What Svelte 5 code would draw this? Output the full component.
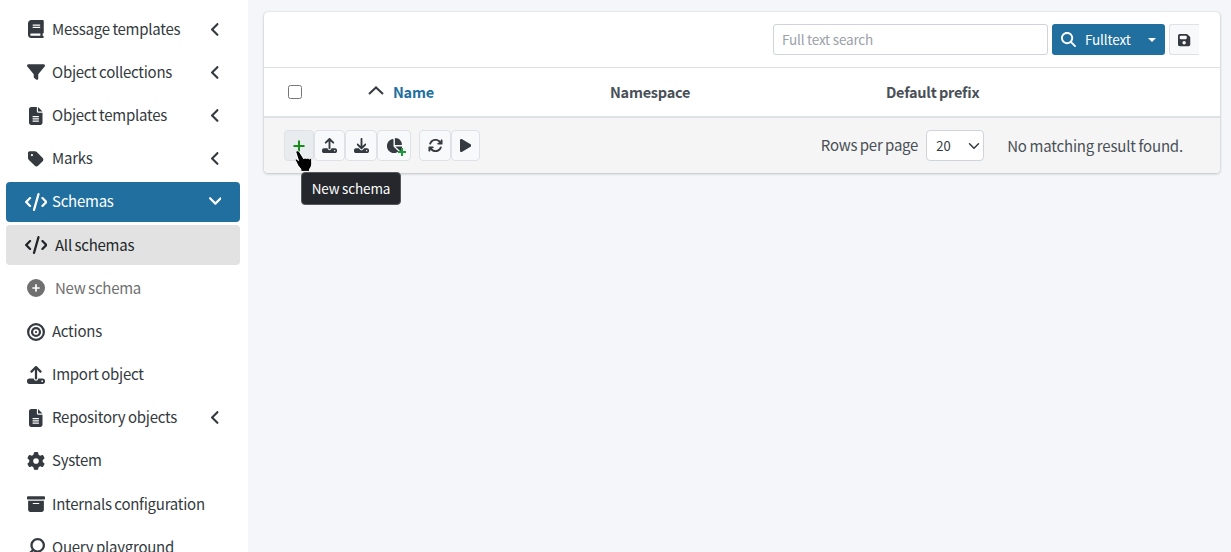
<script>
  const I = {
    book: ['0 0 448 512', 'M96 0C43 0 0 43 0 96V416c0 53 43 96 96 96H384h32c17.7 0 32-14.3 32-32s-14.3-32-32-32V384c17.7 0 32-14.3 32-32V32c0-17.7-14.3-32-32-32H384 96zm0 384H352v64H96c-17.7 0-32-14.3-32-32s14.3-32 32-32zm32-240c0-8.8 7.2-16 16-16H336c8.8 0 16 7.2 16 16s-7.2 16-16 16H144c-8.8 0-16-7.2-16-16zm16 48H336c8.8 0 16 7.2 16 16s-7.2 16-16 16H144c-8.8 0-16-7.2-16-16s7.2-16 16-16z'],
    filter: ['0 0 512 512', 'M3.9 54.9C10.5 40.9 24.5 32 40 32H472c15.5 0 29.5 8.9 36.1 22.9s4.6 30.5-5.2 42.5L320 320.9V448c0 12.1-6.8 23.2-17.7 28.6s-23.8 4.3-33.5-3l-64-48c-8.1-6-12.8-15.5-12.8-25.6V320.9L9 97.3C-.7 85.4-2.8 68.8 3.9 54.9z'],
    file: ['0 0 384 512', 'M64 0C28.7 0 0 28.7 0 64V448c0 35.3 28.7 64 64 64H320c35.3 0 64-28.7 64-64V160H256c-17.7 0-32-14.3-32-32V0H64zM256 0V128H384L256 0zM112 256H272c8.8 0 16 7.2 16 16s-7.2 16-16 16H112c-8.8 0-16-7.2-16-16s7.2-16 16-16zm0 64H272c8.8 0 16 7.2 16 16s-7.2 16-16 16H112c-8.8 0-16-7.2-16-16s7.2-16 16-16zm0 64H272c8.8 0 16 7.2 16 16s-7.2 16-16 16H112c-8.8 0-16-7.2-16-16s7.2-16 16-16z'],
    tag: ['0 0 448 512', 'M0 80V229.5c0 17 6.7 33.3 18.7 45.3l176 176c25 25 65.5 25 90.5 0L418.7 317.3c25-25 25-65.5 0-90.5l-176-176c-12-12-28.3-18.7-45.3-18.7H48C21.5 32 0 53.5 0 80zm112 32a32 32 0 1 1 0 64 32 32 0 1 1 0-64z'],
    code: ['0 0 640 512', 'M392.8 1.2c-17-4.9-34.7 5-39.6 22l-128 448c-4.9 17 5 34.7 22 39.6s34.7-5 39.6-22l128-448c4.9-17-5-34.7-22-39.6zm80.6 120.1c-12.5 12.5-12.5 32.8 0 45.3L562.7 256l-89.4 89.4c-12.5 12.5-12.5 32.8 0 45.3s32.8 12.5 45.3 0l112-112c12.5-12.5 12.5-32.8 0-45.3l-112-112c-12.5-12.5-32.8-12.5-45.3 0zm-306.7 0c-12.5-12.5-32.8-12.5-45.3 0l-112 112c-12.5 12.5-12.5 32.8 0 45.3l112 112c12.5 12.5 32.8 12.5 45.3 0s12.5-32.8 0-45.3L77.3 256l89.4-89.4c12.5-12.5 12.5-32.8 0-45.3z'],
    plusc: ['0 0 512 512', 'M256 512A256 256 0 1 0 256 0a256 256 0 1 0 0 512zM232 344V280H168c-13.3 0-24-10.7-24-24s10.7-24 24-24h64V168c0-13.3 10.7-24 24-24s24 10.7 24 24v64h64c13.3 0 24 10.7 24 24s-10.7 24-24 24H280v64c0 13.3-10.7 24-24 24s-24-10.7-24-24z'],
    bullseye: ['0 0 512 512', 'M448 256A192 192 0 1 0 64 256a192 192 0 1 0 384 0zM0 256a256 256 0 1 1 512 0A256 256 0 1 1 0 256zm256 80a80 80 0 1 0 0-160 80 80 0 1 0 0 160zm0-224a144 144 0 1 1 0 288 144 144 0 1 1 0-288zM224 256a32 32 0 1 1 64 0 32 32 0 1 1 -64 0z'],
    upload: ['0 0 512 512', 'M288 109.3V352c0 17.7-14.3 32-32 32s-32-14.3-32-32V109.3l-73.4 73.4c-12.5 12.5-32.8 12.5-45.3 0s-12.5-32.8 0-45.3l128-128c12.5-12.5 32.8-12.5 45.3 0l128 128c12.5 12.5 12.5 32.8 0 45.3s-32.8 12.5-45.3 0L288 109.3zM64 352H192c0 35.3 28.7 64 64 64s64-28.7 64-64H448c35.3 0 64 28.7 64 64v32c0 35.3-28.7 64-64 64H64c-35.3 0-64-28.7-64-64V416c0-35.3 28.7-64 64-64zM432 456a24 24 0 1 0 0-48 24 24 0 1 0 0 48z'],
    download: ['0 0 512 512', 'M288 32c0-17.7-14.3-32-32-32s-32 14.3-32 32V274.7l-73.4-73.4c-12.5-12.5-32.8-12.5-45.3 0s-12.5 32.8 0 45.3l128 128c12.5 12.5 32.8 12.5 45.3 0l128-128c12.5-12.5 12.5-32.8 0-45.3s-32.8-12.5-45.3 0L288 274.7V32zM64 352c-35.3 0-64 28.7-64 64v32c0 35.3 28.7 64 64 64H448c35.3 0 64-28.7 64-64V416c0-35.3-28.7-64-64-64H346.5l-45.3 45.3c-25 25-65.5 25-90.5 0L165.5 352H64zm368 56a24 24 0 1 1 0 48 24 24 0 1 1 0-48z'],
    cog: ['0 0 512 512', 'M495.9 166.6c3.2 8.7 .5 18.4-6.4 24.6l-43.3 39.4c1.1 8.3 1.7 16.8 1.7 25.4s-.6 17.1-1.7 25.4l43.3 39.4c6.9 6.2 9.6 15.9 6.4 24.6c-4.4 11.9-9.7 23.3-15.8 34.3l-4.7 8.1c-6.6 11-14 21.4-22.1 31.2c-5.9 7.2-15.7 9.6-24.5 6.8l-55.7-17.7c-13.4 10.3-28.2 18.9-44 25.4l-12.5 57.1c-2 9.1-9 16.3-18.2 17.8c-13.8 2.3-28 3.5-42.5 3.5s-28.7-1.2-42.5-3.5c-9.2-1.5-16.2-8.7-18.2-17.8l-12.5-57.1c-15.8-6.5-30.6-15.1-44-25.4L83.1 425.9c-8.8 2.8-18.6 .3-24.5-6.8c-8.1-9.8-15.5-20.2-22.1-31.2l-4.7-8.1c-6.1-11-11.4-22.4-15.8-34.3c-3.2-8.7-.5-18.4 6.4-24.6l43.3-39.4C64.6 273.1 64 264.6 64 256s.6-17.1 1.7-25.4L22.4 191.2c-6.9-6.2-9.6-15.9-6.4-24.6c4.4-11.9 9.7-23.3 15.8-34.3l4.7-8.1c6.6-11 14-21.4 22.1-31.2c5.9-7.2 15.7-9.6 24.5-6.8l55.7 17.7c13.4-10.3 28.2-18.9 44-25.4l12.5-57.1c2-9.1 9-16.3 18.2-17.8C227.3 1.2 241.5 0 256 0s28.7 1.2 42.5 3.5c9.2 1.5 16.2 8.7 18.2 17.8l12.5 57.1c15.8 6.5 30.6 15.1 44 25.4l55.7-17.7c8.8-2.8 18.6-.3 24.5 6.8c8.1 9.8 15.5 20.2 22.1 31.2l4.7 8.1c6.1 11 11.4 22.4 15.8 34.3zM256 336a80 80 0 1 0 0-160 80 80 0 1 0 0 160z'],
    archive: ['0 0 512 512', 'M32 32H480c17.7 0 32 14.3 32 32V96c0 17.7-14.3 32-32 32H32C14.3 128 0 113.7 0 96V64C0 46.3 14.3 32 32 32zm0 128H480V416c0 35.3-28.7 64-64 64H96c-35.3 0-64-28.7-64-64V160zm128 80c0 8.8 7.2 16 16 16H336c8.8 0 16-7.2 16-16s-7.2-16-16-16H176c-8.8 0-16 7.2-16 16z'],
    search: ['0 0 512 512', 'M416 208c0 45.9-14.9 88.3-40 122.7L502.6 457.4c12.5 12.5 12.5 32.8 0 45.3s-32.8 12.5-45.3 0L330.7 376c-34.4 25.2-76.8 40-122.7 40C93.1 416 0 322.9 0 208S93.1 0 208 0S416 93.1 416 208zM208 352a144 144 0 1 0 0-288 144 144 0 1 0 0 288z'],
    save: ['0 0 448 512', 'M64 32C28.7 32 0 60.7 0 96V416c0 35.3 28.7 64 64 64H384c35.3 0 64-28.7 64-64V173.3c0-17-6.7-33.3-18.7-45.3L352 50.7C340 38.7 323.7 32 306.7 32H64zm0 96c0-17.7 14.3-32 32-32H288c17.7 0 32 14.3 32 32v64c0 17.7-14.3 32-32 32H96c-17.7 0-32-14.3-32-32V128zM224 288a64 64 0 1 1 0 128 64 64 0 1 1 0-128z'],
    sync: ['0 0 512 512', 'M105.1 202.6c7.7-21.8 20.2-42.3 37.8-59.8c62.5-62.5 163.8-62.5 226.3 0L386.3 160H352c-17.7 0-32 14.3-32 32s14.3 32 32 32H463.5c0 0 0 0 0 0h.4c17.7 0 32-14.3 32-32V80c0-17.7-14.3-32-32-32s-32 14.3-32 32v35.2L414.4 97.6c-87.5-87.5-229.3-87.5-316.8 0C73.2 122 55.6 150.7 44.8 181.4c-5.9 16.7 2.9 34.9 19.5 40.8s34.9-2.9 40.8-19.5zM39 289.3c-5 1.5-9.8 4.2-13.7 8.2c-4 4-6.7 8.8-8.1 14c-.3 1.2-.6 2.5-.8 3.8c-.3 1.7-.4 3.4-.4 5.1V432c0 17.7 14.3 32 32 32s32-14.3 32-32V396.9l17.6 17.5 0 0c87.5 87.4 229.3 87.4 316.7 0c24.4-24.4 42.1-53.1 52.9-83.7c5.9-16.7-2.9-34.9-19.5-40.8s-34.9 2.9-40.8 19.5c-7.7 21.8-20.2 42.3-37.8 59.8c-62.5 62.5-163.8 62.5-226.3 0l-.1-.1L125.6 352H160c17.7 0 32-14.3 32-32s-14.3-32-32-32H48.4c-1.6 0-3.2 .1-4.8 .3s-3.1 .5-4.6 1z'],
    play: ['0 0 384 512', 'M73 39c-14.8-9.1-33.4-9.4-48.5-.9S0 62.6 0 80V432c0 17.4 9.4 33.4 24.5 41.9s33.7 8.1 48.5-.9L361 297c14.3-8.7 23-24.2 23-41s-8.7-32.2-23-41L73 39z'],
    pie: ['0 0 576 512', 'M304 240V16.6c0-9 7-16.6 16-16.6C443.7 0 544 100.3 544 224c0 9-7.6 16-16.6 16H304zM32 272C32 150.7 122.1 50.3 239 34.3c9.2-1.3 17 6.1 17 15.4V288L412.5 444.5c6.7 6.7 6.2 17.7-1.5 23.1C371.8 495.6 323.8 512 272 512C139.5 512 32 404.6 32 272zm526.4 16c9.3 0 16.6 7.8 15.4 17c-7.7 55.9-34.6 105.6-73.9 142.3c-6 5.6-15.4 5.2-21.2-.7L320 288H558.4z'],
    left: ['0 0 256 512', 'M9.4 233.4c-12.5 12.5-12.5 32.8 0 45.3l160 160c12.5 12.5 32.8 12.5 45.3 0s12.5-32.8 0-45.3L77.3 256 214.6 118.6c12.5-12.5 12.5-32.8 0-45.3s-32.8-12.5-45.3 0l-160 160z'],
    down: ['0 0 384 512', 'M169.4 342.6c12.5 12.5 32.8 12.5 45.3 0l160-160c12.5-12.5 12.5-32.8 0-45.3s-32.8-12.5-45.3 0L192 274.7 54.6 137.4c-12.5-12.5-32.8-12.5-45.3 0s-12.5 32.8 0 45.3l160 160z']
  };

  const nav = [
    { icon: 'book', label: 'Message templates', arrow: true },
    { icon: 'filter', label: 'Object collections', arrow: true },
    { icon: 'file', label: 'Object templates', arrow: true },
    { icon: 'tag', label: 'Marks', arrow: true },
    { icon: 'code', label: 'Schemas', open: true, kind: 'active' },
    { icon: 'code', label: 'All schemas', kind: 'current' },
    { icon: 'plusc', label: 'New schema', kind: 'muted' },
    { icon: 'bullseye', label: 'Actions' },
    { icon: 'upload', label: 'Import object' },
    { icon: 'file', label: 'Repository objects', arrow: true },
    { icon: 'cog', label: 'System' },
    { icon: 'archive', label: 'Internals configuration' },
    { icon: 'search', label: 'Query playground', flip: true }
  ];
</script>

{#snippet ic(name, cls = '')}
  <svg class="ic {cls}" viewBox={I[name][0]} aria-hidden="true"><path d={I[name][1]} /></svg>
{/snippet}

<div class="page">
  <aside class="sidebar">
    {#each nav as n}
      <div class="nav {n.kind ?? ''}">
        <span class="nav-icon">{@render ic(n.icon, n.flip ? 'flip' : '')}</span>
        <span class="nav-label">{n.label}</span>
        {#if n.arrow}{@render ic('left', 'chev')}{/if}
        {#if n.open}{@render ic('down', 'chev-down')}{/if}
      </div>
    {/each}
  </aside>

  <main class="main">
    <section class="card">
      <div class="search-bar">
        <input class="search" placeholder="Full text search" />
        <button class="go">
          {@render ic('search', 'go-ic')}
          <span class="go-label">Fulltext</span>
          <span class="caret"></span>
        </button>
        <button class="save">{@render ic('save', 'save-ic')}</button>
      </div>

      <div class="thead">
        <span class="cell"><span class="check"></span></span>
        <span class="cell name">
          <svg class="sort" viewBox="0 0 16 9" aria-hidden="true"><path d="M1 8 L8 1.4 L15 8" /></svg>
          <span>Name</span>
        </span>
        <span class="cell">Namespace</span>
        <span class="cell">Default prefix</span>
      </div>

      <div class="tfoot">
        <div class="tools">
          <div class="group">
            <button class="tool add w30">
              <svg class="plus" viewBox="0 0 12 12" aria-hidden="true"><path d="M6 .5v11M.5 6h11" /></svg>
            </button>
            <button class="tool w31">{@render ic('upload', 't-ic')}</button>
            <button class="tool w32">{@render ic('download', 't-ic')}</button>
            <button class="tool w34 pie-btn">
              {@render ic('pie', 't-ic')}
              <svg class="mini-plus" viewBox="0 0 10 10" aria-hidden="true"><path d="M5 1v8M1 5h8" /></svg>
            </button>
          </div>
          <div class="group">
            <button class="tool w32">{@render ic('sync', 't-ic')}</button>
            <button class="tool w29">{@render ic('play', 't-ic')}</button>
          </div>
        </div>
        <div class="paging">
          <span class="rows-label">Rows per page</span>
          <select class="rows"><option>20</option></select>
          <span class="result">No matching result found.</span>
        </div>
      </div>

      <div class="tooltip">New schema</div>
      <svg class="cursor" viewBox="0 0 18 22" aria-hidden="true">
        <path d="M2.8.8C1.7.8 1.2 1.8 1.5 2.8L4 10.6 2.6 9.4C1.5 8.5.5 9.2.9 10.4l2.6 5.2 2.9 3.6v2.2h8.6v-2.2c1.4-1.6 2.2-3.6 2.2-6V9.800c0-1.400-2-1.700-2.500-.6-.2-1.300-2.200-1.500-2.700-.3-.4-1.200-2.300-1.300-2.700-.1L5.300 2.400C4.800 1.300 3.900.8 2.800.8z" fill="#000" stroke="#fff" stroke-width="1" stroke-linejoin="round"/>
      </svg>
    </section>
  </main>
</div>

<style>
  :global(body) { margin: 0; background: #f4f6f9; }
  .page {
    display: flex;
    height: 552px;
    overflow: hidden;
    background: #f4f6f9;
    color: #343a40;
    font-family: "Noto Sans CJK SC", "Liberation Sans", sans-serif;
    font-size: 15px;
    letter-spacing: -.25px;
    word-spacing: -.5px;
    line-height: 24px;
  }
  .sidebar {
    width: 248px;
    flex: none;
    box-sizing: border-box;
    padding: 9.2px 8px 0 6px;
    background: #fff;
    overflow: hidden;
  }
  .nav {
    display: flex;
    align-items: center;
    height: 40px;
    margin-bottom: 3.2px;
    padding: 0 16px;
    border-radius: 4px;
    color: #343a40;
    white-space: nowrap;
  }
  .nav-icon {
    width: 26px;
    margin: 0 3px 0 1px;
    flex: none;
    display: flex;
    justify-content: center;
  }
  .nav-label { flex: 1; position: relative; top: -.6px; }
  .ic { display: block; height: 18px; fill: currentColor; flex: none; }
  .flip { transform: scaleX(-1); }
  .nav .chev { height: 17px; width: 8.5px; margin-right: 4.500px; }
  .nav .chev-down { height: 17px; width: 12.75px; margin-right: 2.6px; }
  .active { background: #206f9f; color: #fff; }
  .current { background: #e2e2e2; color: #212529; }
  .current .nav-label, .muted .nav-label { margin-left: 3px; }
  .muted { color: #707070; }

  .main { flex: 1; min-width: 0; padding: 12px 11px 0 16px; }
  .card {
    position: relative;
    background: #fff;
    border-radius: 4px;
    box-shadow: 0 0 1px rgba(0,0,0,.25), 0 1px 3px rgba(0,0,0,.2);
  }
  .search-bar {
    display: flex;
    align-items: center;
    justify-content: flex-end;
    height: 56px;
    box-sizing: border-box;
    padding: 0 21px 0 0;
    border-bottom: 1px solid #dee2e6;
    gap: 4px;
  }
  .search {
    width: 275px;
    height: 31px;
    box-sizing: border-box;
    padding: 0 8px 2px;
    border: 1px solid #ced4da;
    border-radius: 3px;
    font: inherit;
    font-size: 13.5px;
    letter-spacing: -.2px;
    outline: none;
  }
  .search::placeholder { color: #9aa1a8; opacity: 1; }
  .go {
    display: flex;
    align-items: center;
    width: 113px;
    height: 31px;
    padding: 0 0 0 9px;
    border: 0;
    border-radius: 3px;
    background: #206f9f;
    color: #fff;
    font: inherit;
    font-size: 13.5px;
    letter-spacing: -.15px;
  }
  .go .go-ic { height: 15px; margin-right: 9px; }
  .go-label { flex: 1; text-align: left; position: relative; top: -.5px; }
  .caret {
    width: 0; height: 0;
    margin-right: 9px;
    border-left: 4px solid transparent;
    border-right: 4px solid transparent;
    border-top: 4px solid #fff;
  }
  .save {
    width: 30px;
    height: 31px;
    padding: 0;
    display: flex;
    align-items: center;
    justify-content: center;
    border: 1px solid #dee2e6;
    border-right: 0;
    border-radius: 3px 0 0 3px;
    background: #f8f9fa;
    color: #343a40;
  }
  .save .save-ic { height: 14px; }

  .thead {
    display: grid;
    grid-template-columns: 104px 242px 276px 1fr;
    align-items: center;
    height: 50px;
    box-sizing: border-box;
    border-bottom: 2px solid #dee2e6;
    font-weight: 700;
    color: #495057;
    font-size: 14.5px;
  }
  .cell { display: flex; align-items: center; }
  .check {
    width: 14px; height: 14px;
    margin-left: 24px;
    box-sizing: border-box;
    border: 1px solid #767676;
    border-radius: 2.5px;
    background: #fff;
  }
  .name { color: #206f9f; gap: 9px; }
  .sort { width: 16px; height: 9px; fill: none; stroke: #343a40; stroke-width: 2; margin-top: -3px; }

  .tfoot {
    display: flex;
    align-items: center;
    justify-content: space-between;
    height: 55px;
    padding: 0 37px 0 20px;
    background: #f5f5f5;
    border-radius: 0 0 4px 4px;
  }
  .tools { display: flex; gap: 8px; }
  .group { display: flex; }
  .tool {
    height: 31px;
    padding: 0;
    display: flex;
    align-items: center;
    justify-content: center;
    border: 1px solid #dee2e6;
    border-radius: 4px;
    background: #f8f9fa;
    color: #343a40;
  }
  .w30 { width: 30px; }
  .w31 { width: 31px; }
  .w32 { width: 32px; }
  .w34 { width: 34px; }
  .w29 { width: 29px; }
  .add { background: #e9ecef; }
  .plus { width: 12px; height: 12px; fill: none; stroke: #1a8a1a; stroke-width: 2; }
  .tool .t-ic { height: 15px; }
  .pie-btn { position: relative; }
  .mini-plus {
    position: absolute;
    right: 3px; bottom: 3px;
    width: 10px; height: 10px;
    fill: none; stroke: #1a9a3a; stroke-width: 2;
  }
  .paging { display: flex; align-items: center; color: #495057; }
  .rows-label { margin-right: 8px; position: relative; top: -1px; }
  .result { letter-spacing: -.17px; }
  .rows {
    appearance: none;
    width: 58px;
    height: 31px;
    padding: 0 0 0 9px;
    margin-right: 23px;
    border: 1px solid #ced4da;
    border-radius: 4px;
    background: #fff url("data:image/svg+xml,%3csvg xmlns='http://www.w3.org/2000/svg' viewBox='0 0 16 16'%3e%3cpath fill='none' stroke='%23343a40' stroke-linecap='round' stroke-linejoin='round' stroke-width='2' d='M2 5l6 6 6-6'/%3e%3c/svg%3e") no-repeat right 1px center / 16px 12px;
    color: #343a40;
    font: inherit;
    font-size: 13px;
  }
  .tooltip {
    position: absolute;
    left: 37px;
    top: 160px;
    width: 100px;
    height: 33px;
    box-sizing: border-box;
    border: 1px solid #55595e;
    border-radius: 4px;
    background: #24272b;
    color: #fff;
    font-size: 13.5px;
    letter-spacing: -.1px;
    line-height: 31px;
    text-align: center;
  }
  .cursor { position: absolute; left: 30px; top: 138px; width: 19px; height: 22px; }
</style>
